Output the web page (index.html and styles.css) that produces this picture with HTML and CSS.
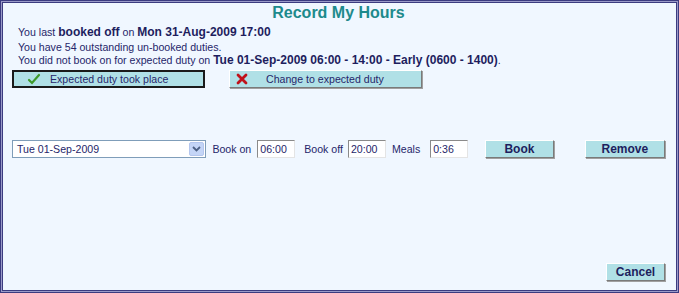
FILE: index.html
```html
<!DOCTYPE html>
<html lang="en">
<head>
    <meta charset="UTF-8">
    <title>Record My Hours</title>
    <link rel="stylesheet" href="styles.css">
</head>
<body>
    <div class="panel">
        <h1>Record My Hours</h1>
        <div class="info">
            <p class="last">You last <b>booked off</b> on <b>Mon 31-Aug-2009 17:00</b></p>
            <p>You have 54 outstanding un-booked duties.</p>
            <p>You did not book on for expected duty on <b>Tue 01-Sep-2009 06:00 - 14:00 - Early (0600 - 1400)</b>.</p>
        </div>
        <div class="actions">
            <button class="btn wide focused">
                <svg class="icon" width="14" height="12" viewBox="0 0 14 12">
                    <path d="M2 7 L5 10 L12 2" fill="none" stroke="#3d9a2a" stroke-width="2.2" stroke-linecap="round"/>
                </svg>
                <span>Expected duty took place</span>
            </button>
            <button class="btn wide">
                <svg class="icon" width="12" height="12" viewBox="0 0 12 12">
                    <path d="M2 2 L10 10 M10 2 L2 10" stroke="#c0121a" stroke-width="2.8" stroke-linecap="round"/>
                </svg>
                <span>Change to expected duty</span>
            </button>
        </div>
        <div class="booking">
            <div class="select">
                <span class="select-text">Tue 01-Sep-2009</span>
                <span class="select-arrow">
                    <svg width="9" height="6" viewBox="0 0 9 6">
                        <path d="M1 1 L4.5 4.5 L8 1" fill="none" stroke="#4d6185" stroke-width="1.8"/>
                    </svg>
                </span>
            </div>
            <label class="field on">Book on <input type="text" value="06:00"></label>
            <label class="field off">Book off <input type="text" value="20:00"></label>
            <label class="field meals">Meals <input type="text" value="0:36"></label>
            <button class="btn bold book">Book</button>
            <button class="btn bold remove">Remove</button>
        </div>
        <div class="footer">
            <button class="btn bold cancel">Cancel</button>
        </div>
    </div>
</body>
</html>
```

FILE: styles.css
```css
* {
    margin: 0;
    padding: 0;
    box-sizing: border-box;
}

body {
    font-family: 'Liberation Sans', Arial, sans-serif;
    font-size: 10.6px;
    color: #26266a;
    background: #f0f7ff;
}

.panel {
    width: 679px;
    height: 293px;
    border: 1px solid #3b3b80;
    box-shadow: inset 0 0 0 1px #9a9ac8, inset 0 0 0 2px #3b3b80;
    background: #f0f7ff;
    padding: 3px 13px 11px 11px;
    display: flex;
    flex-direction: column;
}

h1 {
    color: #1d8a8c;
    font-size: 16px;
    font-weight: bold;
    text-align: center;
    line-height: 18px;
}

.info {
    padding-left: 6px;
    margin-top: 2px;
}

.info p {
    line-height: 13px;
    white-space: nowrap;
}

.info p.last {
    line-height: 16px;
    margin-bottom: 1px;
}

.info b {
    font-size: 12px;
    color: #1e1e5e;
}

.actions {
    display: flex;
    gap: 24px;
    margin-top: 3px;
}

.btn {
    background: #b0e0e6;
    color: #26266a;
    font-family: 'Liberation Sans', Arial, sans-serif;
    font-size: 10.6px;
    border: 1px solid;
    border-color: #ffffff #7a7a7a #7a7a7a #ffffff;
    box-shadow: 1px 1px 0 #a0a0a0;
    height: 18px;
    white-space: nowrap;
    cursor: pointer;
}

.btn.wide {
    width: 193px;
    display: flex;
    align-items: center;
    gap: 18px;
    padding-left: 6px;
}

.btn.focused {
    border: 2px solid #1a1a1a;
    box-shadow: none;
    padding-left: 13px;
    gap: 9px;
}

.icon {
    flex: none;
}

.btn.bold {
    font-weight: bold;
    font-size: 12px;
    color: #1e1e5e;
}

.booking {
    display: flex;
    align-items: center;
    margin-top: 52px;
}

.select {
    width: 196px;
    height: 18px;
    background: #ffffff;
    border: 1px solid #7f9db9;
    display: flex;
    align-items: center;
}

.select-text {
    flex: 1;
    padding-left: 4px;
}

.select-arrow {
    width: 15px;
    height: 14px;
    margin-right: 1px;
    background: #c4d5f7;
    border: 1px solid #b4c6ee;
    border-radius: 2px;
    display: flex;
    align-items: center;
    justify-content: center;
}

.field {
    display: flex;
    align-items: center;
    white-space: nowrap;
}

.field input {
    width: 38px;
    height: 18px;
    font-family: 'Liberation Sans', Arial, sans-serif;
    font-size: 10.6px;
    color: #26266a;
    background: #ffffff;
    border: 1px solid;
    border-color: #8a8a8a #e4e4e4 #e4e4e4 #8a8a8a;
    padding-left: 2px;
}

.field.on {
    margin-left: 6px;
}

.field.on input {
    margin-left: 6px;
}

.field.off {
    margin-left: 9px;
}

.field.off input {
    margin-left: 5px;
}

.field.meals {
    margin-left: 6px;
}

.field.meals input {
    margin-left: 10px;
}

.book {
    width: 69px;
    margin-left: 17px;
}

.remove {
    width: 81px;
    margin-left: 31px;
}

.footer {
    margin-top: auto;
    display: flex;
    justify-content: flex-end;
}

.cancel {
    width: 59px;
}
```
